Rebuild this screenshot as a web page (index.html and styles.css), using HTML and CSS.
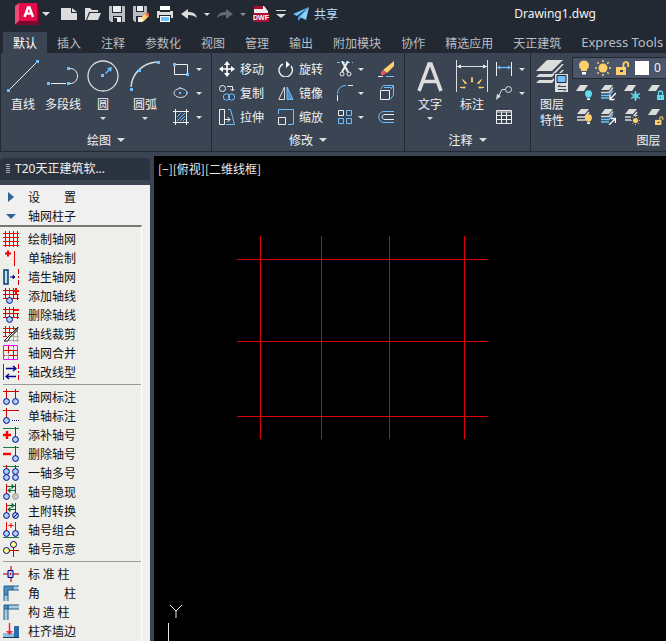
FILE: index.html
```html
<!DOCTYPE html>
<html lang="zh-CN">
<head>
<meta charset="utf-8">
<title>Drawing1.dwg</title>
<link rel="stylesheet" href="styles.css">
</head>
<body>
<svg class="defs" aria-hidden="true">
  <symbol id="sheet" viewBox="0 0 12 6"><path d="M4 0h8L8 6H0z" fill="#dcdcdc"/></symbol>
  <symbol id="sheets" viewBox="0 0 14 14"><path d="M5 0h8L9 5H1z" fill="#dcdcdc"/><path d="M1 8h8l4-5M1 11h8l4-5" fill="none" stroke="#dcdcdc" stroke-width="1.6"/></symbol>
  <symbol id="sheets-blue" viewBox="0 0 14 14"><path d="M5 0h8L9 5H1z" fill="#dcdcdc"/><path d="M1 7.5h8l4-5" fill="none" stroke="#dcdcdc" stroke-width="1.4"/><path d="M1 10.500h8l4-5M1 13h8" fill="none" stroke="#6cc0ff" stroke-width="1.4"/></symbol>
  <symbol id="sun" viewBox="0 0 16 16"><circle cx="8" cy="8" r="4.500" fill="#ffcf6b"/><path d="M8 0v2M8 14v2M0 8h2M14 8h2M2.300 2.300l1.500 1.500M12.200 12.200l1.500 1.500M2.300 13.700l1.500-1.500M12.200 3.800l1.500-1.500" stroke="#ffcf6b" stroke-width="1.5"/></symbol>
  <symbol id="bulb" viewBox="0 0 12 16"><circle cx="6" cy="5.500" r="5" fill="currentColor"/><path d="M3 8h6v3H3z" fill="currentColor"/><path d="M4 12h4v2.500H4z" fill="#fff"/></symbol>
  <symbol id="unlock" viewBox="0 0 14 14"><path d="M7.500 6V3.500a2.300 2.300 0 0 1 4.700 0V6" fill="none" stroke="#ffcf6b" stroke-width="1.8"/><path d="M0 6h10v8H0z" fill="#ffcf6b"/><path d="M4 9h3v2H4z" fill="#3b4453"/></symbol>
  <symbol id="bubble" viewBox="0 0 7 7"><circle cx="3.500" cy="3.500" r="2.900" fill="#a9d3fb" stroke="#000080"/></symbol>
  <symbol id="bubbles2" viewBox="0 0 16 16"><use href="#bubble" x="0" y="9" width="7" height="7"/><use href="#bubble" x="9" y="9" width="7" height="7"/></symbol>
</svg>

<header class="titlebar">
  <button class="logo" aria-label="应用程序菜单">
    <svg width="24" height="22" viewBox="0 0 24 22"><path d="M4 0h18v18H4z" fill="#e60c4c"/><path d="M4 0v18L0 22V3z" fill="#f04a78"/><path d="M0 22l4-4h18V3l2 1v18z" fill="#7c0a2c"/><path d="M9.500 14L13 4.500h1.500L18 14M11 10.500h6" fill="none" stroke="#fff" stroke-width="2.400"/></svg>
    <span class="caret wide"></span>
  </button>
  <nav class="quick" aria-label="快速访问">
    <button aria-label="新建"><svg width="16" height="16"><path d="M0 2h10v5h6v7H0z" fill="#dcdcdc"/><path d="M11 2l5 4h-5z" fill="#dcdcdc"/></svg></button>
    <button aria-label="打开"><svg width="16" height="16"><path d="M0 14V2h5l2 2h6v2H4L1 14z" fill="#dcdcdc"/><path d="M5 7h11l-3 7H2z" fill="#dcdcdc"/></svg></button>
    <button aria-label="保存"><svg width="16" height="16"><path d="M0 0h16v16H2l-2-2z" fill="#b9bcc0"/><path d="M3 0h10v7H3zM4 10h9v6H4z" fill="#222933"/><path d="M4 0h8v6H4zM5 11h7v5H5z" fill="#eee"/><path d="M5 12h3v4H5z" fill="#222933"/></svg></button>
    <button aria-label="另存为"><svg width="16" height="16"><path d="M0 0h14v9l-5 7H2l-2-2z" fill="#b9bcc0"/><path d="M3 0h8v6H3zM3 10h6v6H3z" fill="#222933"/><path d="M4 0h6v5H4zM5 11h4v5H5z" fill="#eee"/><path d="M7 16l1-4 5-5 3 3-5 5z" fill="#ffcf6b"/><path d="M12 8l2-2 3 3-2 2z" fill="#e96a3c"/><path d="M7 16l1-4 3 3z" fill="#fff"/></svg></button>
    <button aria-label="打印"><svg width="16" height="16"><path d="M3 0h10v4H3z" fill="#fff"/><path d="M0 5h16v7H0z" fill="#dcdcdc"/><path d="M3 5h10v1H3zM2 9h12v3H2z" fill="#222933"/><path d="M3 10h10v6H3z" fill="#fff"/><path d="M4 11h8v4H4z" fill="#6cc0ff"/></svg></button>
    <button aria-label="放弃"><svg width="16" height="16"><path d="M0 8l7-5v3c6 0 8 2 9 6-2-2-5-3-9-3v4z" fill="#dcdcdc"/></svg></button>
    <button class="tiny" aria-label="放弃列表"><span class="caret"></span></button>
    <button aria-label="重做"><svg width="16" height="16"><path d="M16 8L9 3v3C3 6 1 8 0 12c2-2 5-3 9-3v4z" fill="#636971"/></svg></button>
    <button class="tiny" aria-label="重做列表"><span class="caret dim"></span></button>
    <button class="dwf" aria-label="DWF"><svg width="16" height="16"><path d="M1 0h10l4 5v11H1z" fill="#eee"/><path d="M1 0h9v3H1zM0 7h16v9H0z" fill="#a80f36"/></svg><span class="dwf-text">DWF</span></button>
    <button class="more" aria-label="自定义"><svg width="10" height="9"><path d="M0 0h10v1H0zM0 4h10L5 8z" fill="#dcdcdc"/></svg></button>
    <button class="share"><svg width="16" height="16"><path d="M16 1L0 8l4 2z" fill="#6cc0ff"/><path d="M16 1L5 11v4l3-3z" fill="#4a9de0"/><path d="M16 1l-3 13-6-3z" fill="#8bd0ff"/></svg><span>共享</span></button>
  </nav>
  <h1 class="doc">Drawing1.dwg</h1>
</header>

<nav class="tabs">
  <a class="active" href="#home">默认</a><a href="#insert">插入</a><a href="#annotate">注释</a><a href="#param">参数化</a><a href="#view">视图</a><a href="#manage">管理</a><a href="#output">输出</a><a href="#addins">附加模块</a><a href="#collab">协作</a><a href="#featured">精选应用</a><a href="#tarch">天正建筑</a><a class="latin" href="#express">Express Tools</a>
</nav>

<section class="ribbon" id="home">
  <div class="panel draw">
    <div class="body">
      <button class="big"><svg width="32" height="32"><path d="M3 29L29 3" stroke="#eee"/><path d="M0 29h3v3H0zM29 0h3v3h-3z" fill="#6cc0ff"/></svg><span>直线</span></button>
      <button class="big"><svg width="32" height="32"><path d="M4 23.500h15M23 8.500c10 0 10 15 0 15" fill="none" stroke="#eee"/><path d="M0 22h3v3H0zM20 22h3v3h-3zM20 7h3v3h-3z" fill="#6cc0ff"/></svg><span>多段线</span></button>
      <button class="big"><svg width="32" height="32"><circle cx="16" cy="16" r="15" fill="none" stroke="#dcdcdc" stroke-width="1.300"/><path d="M14 14h3v3h-3zM20 8l5-1-1 5-1.500-1.500L19 14l-1-1 3.500-3.500z" fill="#6cc0ff"/></svg><span>圆</span><span class="caret"></span></button>
      <button class="big arc"><svg width="32" height="32"><path d="M2 27C3 13 14 3 28 2" fill="none" stroke="#dcdcdc" stroke-width="1.400"/><path d="M1 28h3v3H1zM28 1h3v3h-3zM9 9h3v3H9z" fill="#6cc0ff"/></svg><span>圆弧</span><span class="caret"></span></button>
      <div class="stack">
        <button aria-label="矩形"><svg width="16" height="16"><path d="M1.500 3.500h13v10h-13z" fill="none" stroke="#eee"/><path d="M0 2h3v3H0zM13 12h3v3h-3z" fill="#6cc0ff"/></svg><span class="caret"></span></button>
        <button aria-label="椭圆"><svg width="16" height="16"><ellipse cx="7.500" cy="8" rx="6.500" ry="4.500" fill="none" stroke="#dcdcdc"/><path d="M6 2h2v2H6zM6 7h2v2H6zM13 7h2v2h-2z" fill="#6cc0ff"/></svg><span class="caret"></span></button>
        <button aria-label="图案填充"><svg width="16" height="16"><path d="M0 2.500h16M0 13.500h16M2.500 0v16M13.500 0v16" stroke="#eee"/><path d="M4 8l4-4M4 12l8-8M7 12l5-5M10 12l2-2" stroke="#6cc0ff"/></svg><span class="caret"></span></button>
      </div>
    </div>
    <button class="name">绘图<span class="caret wide"></span></button>
  </div>

  <div class="panel modify">
    <div class="body tools">
      <button><svg width="16" height="16"><path d="M8 2v12M2 8h12" stroke="#fff" stroke-width="1.600"/><path d="M8 0l3 4H5zM8 16l3-4H5zM0 8l4-3v6zM16 8l-4-3v6z" fill="#fff"/></svg>移动</button>
      <button><svg width="16" height="16"><path d="M5 3a6.700 6.700 0 1 0 8 2" fill="none" stroke="#eee" stroke-width="1.400"/><path d="M8 0l4 3.500L8 7z" fill="#fff"/></svg>旋转</button>
      <button aria-label="修剪"><svg width="16" height="16"><path d="M0 1.500h16" stroke="#6cc0ff" stroke-dasharray="3 2"/><path d="M5 0l6 11M11 0L5 11" stroke="#eee" stroke-width="2"/><circle cx="5" cy="13" r="2" fill="none" stroke="#eee"/><circle cx="12" cy="13" r="2" fill="none" stroke="#eee"/></svg><span class="caret"></span></button>
      <button aria-label="删除"><svg width="16" height="16"><path d="M16 0v5L9 12 5 9z" fill="#ffd06b"/><path d="M5 9l3 3-2 2H3v-3z" fill="#f0525e"/><path d="M0 15.500h5" stroke="#eee"/><path d="M8 15.500h8" stroke="#6cc0ff"/></svg></button>
      <button><svg width="16" height="16"><circle cx="3.500" cy="3.500" r="3" fill="none" stroke="#eee"/><path d="M8 1.500h5.500V5M11.500 4l2 2 2-2" fill="none" stroke="#eee"/><circle cx="7.500" cy="12" r="3.200" fill="none" stroke="#6cc0ff"/><circle cx="12.500" cy="12" r="3.200" fill="none" stroke="#6cc0ff"/></svg>复制</button>
      <button><svg width="16" height="16"><path d="M6.500 2v12.500H.8z" fill="none" stroke="#dcdcdc"/><path d="M9 2v12.500h6z" fill="#4e8fc4" stroke="#6cc0ff"/></svg>镜像</button>
      <button aria-label="圆角"><svg width="16" height="16"><path d="M.5 16v-6M11 .5h5" stroke="#eee"/><path d="M.5 9C.5 4 4 .5 9 .5" fill="none" stroke="#6cc0ff"/></svg><span class="caret"></span></button>
      <button aria-label="长方体"><svg width="16" height="16"><path d="M2.500 5.500h9v9h-9z" fill="none" stroke="#eee"/><path d="M2.500 4l3-3.500h10l-3 4M15.500 1v9l-3 4M6 2.500h7" fill="none" stroke="#6cc0ff"/></svg></button>
      <button><svg width="16" height="16"><path d="M5.500.500h-5v15h5z" fill="none" stroke="#eee"/><path d="M5 10.500h6M8.500 8l2.500 2.500L8.500 13" fill="none" stroke="#fff"/><path d="M9 .5h2.500l4 15H7" fill="none" stroke="#6cc0ff"/></svg>拉伸</button>
      <button><svg width="16" height="16"><path d="M.5 5V.5h15v15H10" fill="none" stroke="#6cc0ff"/><path d="M.5 8.500h7v7h-7z" fill="none" stroke="#eee"/></svg>缩放</button>
      <button aria-label="阵列"><svg width="16" height="16"><path d="M1.500 1.500h5v5h-5z" fill="none" stroke="#eee"/><path d="M9.500 1.500h5v5h-5zM1.500 9.500h5v5h-5zM9.500 9.500h5v5h-5z" fill="none" stroke="#6cc0ff"/></svg><span class="caret"></span></button>
      <button aria-label="偏移"><svg width="16" height="16"><path d="M16 2.500H6c-7 0-7 11 0 11h10" fill="none" stroke="#6cc0ff"/><path d="M16 5.500H7c-4 0-4 5 0 5h9" fill="none" stroke="#eee"/></svg></button>
    </div>
    <button class="name">修改<span class="caret wide"></span></button>
  </div>

  <div class="panel annotate">
    <div class="body">
      <button class="big"><svg width="32" height="32"><path d="M5 31L15 4h2l10 27M8 21.500h16" fill="none" stroke="#dcdcdc" stroke-width="3.600"/></svg><span>文字</span><span class="caret"></span></button>
      <button class="big dim-btn"><svg width="32" height="32"><path d="M.5 0v32M31.500 0v32M1 6.500h30" stroke="#dcdcdc"/><path d="M1 6.500l4-2v4zM31 6.500l-4-2v4z" fill="#eee"/><path d="M15.500 22l.5-5 .5 5zM9.500 24l-3-4.500 4 3.500zM22.500 24l3-4.500-4 3.500zM9 28l-5-.5 5-.5zM23 28l5-.5-5-.5z" fill="#ffcf6b" stroke="#ffcf6b"/></svg><span>标注</span></button>
      <div class="stack">
        <button aria-label="线性"><svg width="16" height="16"><path d="M.5 1v14M15.500 1v14" stroke="#eee"/><path d="M2 6.500h12" stroke="#6cc0ff" stroke-width="1.300"/><path d="M1 6.500l3-2v4zM15 6.500l-3-2v4z" fill="#6cc0ff"/></svg><span class="caret"></span></button>
        <button aria-label="引线"><svg width="16" height="16"><circle cx="12.500" cy="4.500" r="3" fill="none" stroke="#dcdcdc"/><path d="M9.500 4.500H6L2 12" fill="none" stroke="#dcdcdc"/><path d="M0 15l1-6 4 2z" fill="#dcdcdc"/></svg><span class="caret"></span></button>
        <button aria-label="表格"><svg width="16" height="16"><path d="M.5 1.500h15v13H.5zM0 3h16M0 6.500h16M0 10.500h16M5.500 3v12M10.500 3v12" fill="none" stroke="#eee"/></svg></button>
      </div>
    </div>
    <button class="name">注释<span class="caret wide"></span></button>
  </div>

  <div class="panel layers">
    <div class="body">
      <button class="big"><svg width="32" height="32"><path d="M11 0h16L16 11H0z" fill="#dcdcdc"/><path d="M0 17l3-3h13L26 4h2L16 17zM0 23l3-3h13l10-10h2L16 23z" fill="#dcdcdc"/><path d="M18 13h14v19H18z" fill="#3b4453"/><path d="M19 14h13v18H19z" fill="#dcdcdc"/><path d="M21 15.500h9v7h-9z" fill="#6cc0ff" stroke="#222933"/><path d="M22 26.500h8M22 29.500h8M24 24.500l-2 2M28 31.500l2-2" stroke="#3b4453"/></svg><span>图层<br>特性</span></button>
      <div class="layer-tools">
        <button class="layer-box" aria-label="当前图层 0">
          <svg class="yellow" width="12" height="16"><use href="#bulb"/></svg>
          <svg width="16" height="16"><use href="#sun"/></svg>
          <svg width="14" height="14"><use href="#unlock"/></svg>
          <span class="swatch"></span><span class="layer-name">0</span>
        </button>
        <div class="layer-grid">
          <button aria-label="关"><svg class="cyan" width="16" height="16"><use href="#sheet" width="12" height="6"/><use href="#bulb" x="8" y="5" width="9" height="11"/></svg></button>
          <button aria-label="隔离"><svg width="16" height="16"><use href="#sheets-blue" width="14" height="14"/><path d="M16 8l-6 6M10 10v4.500h4.500" fill="none" stroke="#fff" stroke-width="1.300"/></svg></button>
          <button aria-label="冻结"><svg width="16" height="16"><use href="#sheet" width="12" height="6"/><path d="M11.500 6v10M7 8.500l9 5M7 13.500l9-5" stroke="#62dcec" stroke-width="1.400"/><circle cx="11.500" cy="11" r="2.500" fill="none" stroke="#62dcec"/></svg></button>
          <button aria-label="锁定"><svg width="16" height="16"><use href="#sheet" width="12" height="6"/><path d="M10.500 10V8a2 2 0 0 1 4 0v2" fill="none" stroke="#62dcec" stroke-width="1.300"/><path d="M9 10h7v5H9z" fill="#62dcec"/><path d="M12 12h1v1h-1z" fill="#3b4453"/></svg></button>
          <button aria-label="打开所有"><svg class="yellow" width="16" height="16"><use href="#sheets" width="14" height="14"/><use href="#bulb" x="8" y="5" width="9" height="11"/></svg></button>
          <button aria-label="取消隔离"><svg width="16" height="16"><use href="#sheets-blue" width="14" height="14"/><path d="M9 16l6-6M11 9.500h4.500V14" fill="none" stroke="#fff" stroke-width="1.300"/></svg></button>
          <button aria-label="解冻"><svg width="16" height="16"><use href="#sheets" width="14" height="14"/><path d="M7 7h9v9H7z" fill="#3b4453"/><use href="#sun" x="7" y="7" width="9" height="9"/></svg></button>
          <button aria-label="解锁"><svg width="16" height="16"><use href="#sheet" width="12" height="6"/><use href="#unlock" x="7" y="7" width="9" height="9"/></svg></button>
        </div>
      </div>
    </div>
    <button class="name">图层<span class="caret wide"></span></button>
  </div>
</section>

<div class="workspace">
  <aside class="palette">
    <h2 class="palette-title"><span class="grip"></span>T20天正建筑软...</h2>
    <div class="palette-body">
      <ul class="menu">
        <li><button><svg width="16" height="16"><path d="M5 3v10l6-5z" fill="#2d6399"/></svg>设&#12288;&#12288;置</button></li>
        <li><button><svg width="16" height="16"><path d="M3 6h10l-5 5z" fill="#2d6399"/></svg>轴网柱子</button></li>
      </ul>
      <ul class="menu group first">
        <li><button><svg width="16" height="16"><path d="M2.500 0v16M6.500 0v16M10.500 0v16M14.500 0v16M0 2.500h16M0 6.500h16M0 10.500h16M0 14.500h16" stroke="#f00"/></svg>绘制轴网</button></li>
        <li><button><svg width="16" height="16"><path d="M2 3.500h6M5 .5v6" stroke="#f00000" stroke-width="2"/><path d="M11.500 1v15" stroke="#e00"/></svg>单轴绘制</button></li>
        <li><button><svg width="16" height="16"><path d="M1 1h4v14H1z" fill="#b8dff5" stroke="#0d3b66" stroke-width="1.500"/><path d="M7 8h4M10 6.500L12 8l-2 1.500z" fill="#000090" stroke="#000090"/><path d="M15.500 0v16" stroke="#c00" stroke-dasharray="5 2 2 2"/></svg>墙生轴网</button></li>
        <li><button><svg width="16" height="16"><path d="M2.500 0v11M6.500 0v10M10.500 0v11M14.500 6v6M0 2.500h11M0 6.500h16M0 10.500h16" stroke="#c00"/><path d="M6.500 0v9" stroke="#168040"/><path d="M10 3h6M13 0v6" stroke="#f00" stroke-width="2"/><use href="#bubble" x="3" y="9" width="7" height="7"/></svg>添加轴线</button></li>
        <li><button><svg width="16" height="16"><path d="M2.500 0v11M6.500 0v10M10.500 0v11M14.500 6v6M0 2.500h10M0 6.500h16M0 10.500h16" stroke="#c00"/><path d="M6.500 0v9" stroke="#168040"/><path d="M11 3h5" stroke="#f00" stroke-width="2"/><use href="#bubble" x="3" y="9" width="7" height="7"/></svg>删除轴线</button></li>
        <li><button><svg width="16" height="16"><path d="M2.500 0v10M6.500 0v8M10.500 0v4M0 2.500h13M0 6.500h9M0 10.500h4" stroke="#c22000"/><path d="M10.500 8v8M14.500 5v11M6 14.500h10M8 10.500h8" stroke="#aaa"/><path d="M1 15l6-6 8-8-1 4-7 6-2 4z" fill="#fff" stroke="#111"/><path d="M10 6l5-4-1 3-4 3z" fill="#777"/></svg>轴线裁剪</button></li>
        <li><button><svg width="16" height="16"><path d="M5.500 1v14M10.500 1v14M1 5.500h14M1 10.500h14" stroke="#d00"/><path d="M2 10.500h4M5.500 8v6M10.500 2v3" stroke="#aaa"/><path d="M.5.500h14v14H.5z" fill="none" stroke="#f0f"/></svg>轴网合并</button></li>
        <li><button><svg width="16" height="16"><path d="M.5 0v16" stroke="#d00"/><path d="M15.500 0v16" stroke="#d00" stroke-dasharray="5 2 2 2"/><path d="M3 4.500h9M10 2l3 2.500L10 7M13 12.500H4M6 10l-3 2.500L6 15" fill="none" stroke="#000090" stroke-width="1.300"/></svg>轴改线型</button></li>
      </ul>
      <ul class="menu group">
        <li><button><svg width="16" height="16"><path d="M0 2.500h16M3.500 0v10M12.500 0v10" stroke="#c00"/><use href="#bubbles2" width="16" height="16"/></svg>轴网标注</button></li>
        <li><button><svg width="16" height="16"><path d="M0 2.500h16M3.500 0v10" stroke="#c00"/><use href="#bubble" y="9" width="7" height="7"/><path d="M9 12.500h7" stroke="#000090" stroke-dasharray="1 1"/></svg>单轴标注</button></li>
        <li><button><svg width="16" height="16"><path d="M0 1.500h16" stroke="#168040"/><path d="M12.500 0v10" stroke="#c00"/><path d="M0 8h8M4 4v8" stroke="#f00" stroke-width="2.400"/><use href="#bubble" x="9" y="9" width="7" height="7"/></svg>添补轴号</button></li>
        <li><button><svg width="16" height="16"><path d="M0 1.500h16" stroke="#168040"/><path d="M12.500 0v10" stroke="#c00"/><path d="M0 8h8" stroke="#f00" stroke-width="2.400"/><use href="#bubble" x="9" y="9" width="7" height="7"/></svg>删除轴号</button></li>
        <li><button><svg width="16" height="16"><path d="M0 1.500h16" stroke="#168040"/><path d="M3.500 0v5M12.500 0v5" stroke="#c00"/><use href="#bubble" y="3" width="7" height="7"/><use href="#bubble" x="9" y="3" width="7" height="7"/><use href="#bubbles2" width="16" height="16"/></svg>一轴多号</button></li>
        <li><button><svg width="16" height="16"><path d="M3.500 0v10M12.500 0v10" stroke="#c00"/><path d="M4 2.500h8M9 .5l2 2-2 2zM12 6.500H5M7 4.500l-2 2 2 2z" fill="#0b6b37" stroke="#0b6b37"/><use href="#bubble" y="9" width="7" height="7"/><circle cx="12.500" cy="12.500" r="2.900" fill="#ccc" stroke="#999"/></svg>轴号隐现</button></li>
        <li><button><svg width="16" height="16"><path d="M3.500 0v10M12.500 0v10" stroke="#c00"/><path d="M4 2.500h8M9 .5l2 2-2 2zM12 6.500H5M7 4.500l-2 2 2 2z" fill="#0b6b37" stroke="#0b6b37"/><use href="#bubbles2" width="16" height="16"/><path d="M10 15l5-5" stroke="#000080"/></svg>主附转换</button></li>
        <li><button><svg width="16" height="16"><path d="M3.500 0v10M12.500 0v10M8 1v5M5.500 3.500h5" stroke="#e00"/><use href="#bubbles2" y="-1" width="16" height="16"/><path d="M0 15.500h16" stroke="#168040"/></svg>轴号组合</button></li>
        <li><button><svg width="16" height="16"><path d="M6 9.500h10M10.500 6v10" stroke="#c00"/><circle cx="10.500" cy="3.500" r="3" fill="#ffff80" stroke="#000080"/><circle cx="3.500" cy="9.500" r="3" fill="#ffff80" stroke="#000080"/></svg>轴号示意</button></li>
      </ul>
      <ul class="menu group">
        <li><button><svg width="16" height="16"><path d="M0 8h16M8 0v16" stroke="#c44040" stroke-width="1.500"/><path d="M5 4.500h5v7H5z" fill="#a9d3fb" stroke="#000080"/><path d="M7 7h1v2H7z" fill="#c00"/></svg>标 准 柱</button></li>
        <li><button><svg width="16" height="16"><path d="M1 1h14v4H5v11H1z" fill="#a5cdda"/><path d="M1 1h9v4H5v5H1z" fill="#4f8cbf"/><path d="M1 16V1h15M5 16V5h11M5 10H1M10 1v4" fill="none" stroke="#255c8c"/></svg>角&#12288;&#12288;柱</button></li>
        <li><button><svg width="16" height="16"><path d="M1 1h15v4H5v11H1z" fill="#a5cdda"/><path d="M1 1h5v4H1z" fill="#4f8cbf"/><path d="M1 16V1h15M5 16V1M1 5h15" fill="none" stroke="#255c8c"/></svg>构 造 柱</button></li>
        <li><button><svg width="16" height="16"><path d="M0 10h11v5H0z" fill="#8fbfe0"/><path d="M11 3h5v12h-5z" fill="#2d6ca8"/><path d="M0 14.500h16" stroke="#0d3b66"/><path d="M6.500 0v8" stroke="#f24" stroke-width="1.500"/><path d="M3 8h7l-3.500 4z" fill="#f24"/></svg>柱齐墙边</button></li>
      </ul>
    </div>
  </aside>
  <main class="canvas">
    <p class="view-label">[&#8722;][俯视][二维线框]</p>
    <svg class="axes" width="252" height="204" role="img" aria-label="轴网"><path d="M23.500 0v203M84.500 0v203M152.500 0v203M227.500 0v203M0 23.500h251M0 105.500h251M0 180.500h251" stroke="#e00000"/></svg>
    <svg class="ucs" width="20" height="36" role="img" aria-label="UCS"><path d="M4 0l6 6 6-6M10 6v7M2.500 18v18" fill="none" stroke="#e8e8e8"/></svg>
  </main>
</div>
</body>
</html>
```

FILE: styles.css
```css
* { box-sizing: border-box; }

body {
  margin: 0;
  height: 100vh;
  display: flex;
  flex-direction: column;
  overflow: hidden;
  background: #3b4453;
  color: #f2f2f2;
  font: 12px/16px "Noto Sans CJK SC", "Noto Sans", sans-serif;
}

button {
  display: flex;
  align-items: center;
  margin: 0;
  padding: 0;
  border: 0;
  background: none;
  color: inherit;
  font: inherit;
  white-space: pre;
}

svg { display: block; flex: none; }
.defs { position: absolute; width: 0; height: 0; }

.caret {
  flex: none;
  width: 6px;
  border: 3px solid transparent;
  border-top-color: #dcdcdc;
  border-bottom: 0;
}
.caret.wide { width: 8px; border-width: 4px 4px 0; }
.caret.dim { border-top-color: #8a8f96; }

/* title bar */
.titlebar {
  flex: none;
  display: flex;
  align-items: center;
  height: 32px;
  padding: 0 70px 4px 15px;
  background: #222933;
}
.logo { gap: 3px; margin-right: 11px; }
.quick { display: flex; align-items: center; gap: 8px; }
.tiny { width: 4px; justify-content: center; }
.more { width: 8px; justify-content: center; }
.dwf { position: relative; }
.dwf-text {
  position: absolute;
  left: 0;
  right: 0;
  bottom: 0;
  font: bold 7px/9px "Liberation Sans", sans-serif;
  color: #fff;
  text-align: center;
}
.share { gap: 5px; color: #b5dcff; }
.doc {
  margin: 0 0 0 auto;
  font: 12px/16px "Noto Sans", sans-serif;
}

/* ribbon tabs */
.tabs {
  flex: none;
  display: flex;
  height: 21px;
  padding-left: 3px;
  background: #222933;
}
.tabs a {
  flex: none;
  padding: 0 10px;
  color: #b9bdc2;
  line-height: 21px;
  text-decoration: none;
}
.tabs .active { background: #3b4453; color: #fff; }
.tabs .latin { font-family: "Noto Sans", sans-serif; font-size: 13px; }

/* ribbon */
.ribbon {
  flex: none;
  display: flex;
  overflow: hidden;
  border-left: 1px solid #222933;
  border-bottom: 1px solid #222933;
}
.panel {
  flex: none;
  border-right: 1px solid #222933;
}
.body { display: flex; height: 76px; padding-top: 4px; }
.name { width: 100%; height: 22px; justify-content: center; gap: 6px; }

.big {
  flex-direction: column;
  width: 40px;
  padding-top: 3px;
  gap: 4px;
}
.big .caret { margin-top: 1px; }
.arc { width: 44px; }
.stack { display: grid; grid-auto-rows: 24px; margin-left: 6px; }
.stack button { gap: 7px; }

.draw { width: 211px; }
.draw .body { padding-left: 2px; }

.modify { width: 193px; }
.tools {
  display: grid;
  grid-template: repeat(3, 24px) / 59px 59px 41px 16px;
  padding-left: 7px;
}
.tools button { gap: 5px; }

.annotate { width: 126px; }
.annotate .body { padding-left: 4px; }
.annotate .big { width: 42px; }
.annotate .stack { margin-left: 3px; }

.layers { width: 250px; }
.layers .body { padding-left: 1px; }
.layer-tools { flex: 1; }
.layer-box {
  width: 100%;
  height: 22px;
  gap: 5px;
  padding-left: 5px;
  border: 1px solid #222933;
  background: #4b566b;
  white-space: normal;
}
.swatch { width: 14px; height: 14px; background: #fff; }
.layer-name { font-family: "Noto Sans", sans-serif; }
.layer-grid {
  display: grid;
  grid-template-columns: repeat(4, 24px);
  grid-auto-rows: 24px;
  padding: 2px 0 0 4px;
}
.yellow { color: #ffcf6b; }
.cyan { color: #62dcec; }

/* workspace */
.workspace {
  flex: 1;
  display: flex;
  gap: 4px;
  min-height: 0;
  padding-top: 4px;
}
.palette {
  flex: none;
  display: flex;
  flex-direction: column;
  width: 150px;
  padding-top: 2px;
}
.palette-title {
  flex: none;
  display: flex;
  align-items: center;
  gap: 5px;
  height: 22px;
  margin: 0 0 5px;
  padding-left: 6px;
  border-radius: 4px 4px 0 0;
  background: #2c3340;
  font: 12px/20px "Noto Sans", "Noto Sans CJK SC", sans-serif;
}
.grip {
  width: 4px;
  height: 10px;
  background: repeating-linear-gradient(#aab 0 1px, transparent 1px 2px);
}
.palette-body {
  flex: 1;
  min-height: 0;
  overflow: hidden;
  padding: 2px 8px 0 0;
  background: #f0f0f0;
  color: #111;
}
.menu { margin: 0; padding: 0; list-style: none; }
.menu button { height: 19px; gap: 9px; padding-left: 3px; }
.group {
  padding: 3px 0;
  background: linear-gradient(#999, #999) 3px 0 / 100% 1px no-repeat, #eeeeea;
  border-right: 1px solid #fff;
}
.group.first { padding-top: 2px; border-top: 2px solid #777; background: #eeeeea; }

/* drawing area */
.canvas { position: relative; flex: 1; background: #000; overflow: hidden; }
.view-label { margin: 5px 4px; color: #e8e8e8; }
.axes { position: absolute; left: 83px; top: 80px; }
.ucs { position: absolute; left: 12px; bottom: 0; }
```
